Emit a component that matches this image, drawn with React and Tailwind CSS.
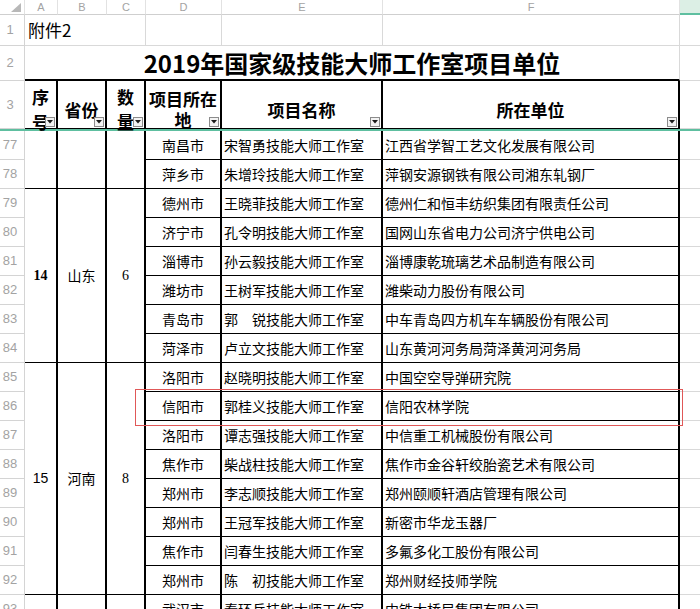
const rows = [
  ["77", "南昌市", "宋智勇技能大师工作室", "江西省学智工艺文化发展有限公司"],
  ["78", "萍乡市", "朱增玲技能大师工作室", "萍钢安源钢铁有限公司湘东轧钢厂"],
  ["79", "德州市", "王晓菲技能大师工作室", "德州仁和恒丰纺织集团有限责任公司"],
  ["80", "济宁市", "孔令明技能大师工作室", "国网山东省电力公司济宁供电公司"],
  ["81", "淄博市", "孙云毅技能大师工作室", "淄博康乾琉璃艺术品制造有限公司"],
  ["82", "潍坊市", "王树军技能大师工作室", "潍柴动力股份有限公司"],
  ["83", "青岛市", "郭　锐技能大师工作室", "中车青岛四方机车车辆股份有限公司"],
  ["84", "菏泽市", "卢立文技能大师工作室", "山东黄河河务局菏泽黄河河务局"],
  ["85", "洛阳市", "赵晓明技能大师工作室", "中国空空导弹研究院"],
  ["86", "信阳市", "郭桂义技能大师工作室", "信阳农林学院"],
  ["87", "洛阳市", "谭志强技能大师工作室", "中信重工机械股份有限公司"],
  ["88", "焦作市", "柴战柱技能大师工作室", "焦作市金谷轩绞胎瓷艺术有限公司"],
  ["89", "郑州市", "李志顺技能大师工作室", "郑州颐顺轩酒店管理有限公司"],
  ["90", "郑州市", "王冠军技能大师工作室", "新密市华龙玉器厂"],
  ["91", "焦作市", "闫春生技能大师工作室", "多氟多化工股份有限公司"],
  ["92", "郑州市", "陈　初技能大师工作室", "郑州财经技师学院"],
  ["93", "武汉市", "秦环兵技能大师工作室", "中铁大桥局集团有限公司"],
];

// merged A-C blocks, keyed by the row where they start
const groups = {
  "77": { span: "row-span-2" },
  "79": { span: "row-span-6", no: "14", noCls: "font-['Liberation_Serif',serif] font-bold", prov: "山东", count: "6" },
  "85": { span: "row-span-8", no: "15", noCls: "font-['Liberation_Sans',sans-serif]", prov: "河南", count: "8" },
  "93": { span: "" },
};

const Drop = () => (
  <span className="absolute right-[1px] bottom-[1px] w-[10px] h-[10px] border border-[#8c8c8c] bg-[#f3f3f3] flex items-center justify-center">
    <svg width="6" height="4" viewBox="0 0 6 4">
      <path d="M0 0h6L3 3.5z" fill="#1a1a1a" />
    </svg>
  </span>
);

const RowHdr = ({ n }) => (
  <div className="flex items-center justify-center pr-[4px] border-r border-b border-[#d4d4d4] text-[13px] text-[#a3a3a3] font-['Liberation_Sans',sans-serif]">
    {n}
  </div>
);

const ColHdr = ({ l }) => (
  <div className="flex items-center justify-center border-r border-b border-r-[#e2e2e2] border-b-[#cfcfcf] text-[11px] text-[#a3a3a3] font-['Liberation_Sans',sans-serif]">
    {l}
  </div>
);

const Head = ({ children, lead = "leading-[25px]" }) => (
  <div className={`relative flex items-center justify-center pt-[9px] text-center font-bold text-[17px] ${lead} border-r-2 border-b border-black`}>
    <span>{children}</span>
    <Drop />
  </div>
);

export default function App() {
  return (
    <div className="relative w-[700px] h-[609px] overflow-hidden bg-white text-black font-['Noto_Sans_CJK_SC',sans-serif]">
      <div className="grid grid-cols-[25px_33px_49px_39px_76px_161px_297px_20px] grid-rows-[15px_31px_35px_48px_2px_repeat(17,29px)]">
        {/* column letters */}
        <div className="flex items-start justify-end pt-[3px] pr-[3px] border-r border-b border-r-[#e2e2e2] border-b-[#cfcfcf]">
          <svg width="10" height="9" viewBox="0 0 10 9">
            <path d="M10 0v9H0z" fill="#b8b8b8" />
          </svg>
        </div>
        <ColHdr l="A" />
        <ColHdr l="B" />
        <ColHdr l="C" />
        <ColHdr l="D" />
        <ColHdr l="E" />
        <ColHdr l="F" />
        <div className="bg-[#dcefe5] border-b-2 border-[#5ebfa0]" />

        {/* row 1 */}
        <RowHdr n="1" />
        <div className="col-span-3 flex items-center pl-[3px] text-[17px] border-r border-b border-[#d9d9d9]">附件2</div>
        <div className="border-r border-b border-[#d9d9d9]" />
        <div className="border-r border-b border-[#d9d9d9]" />
        <div className="border-r border-b border-[#d9d9d9]" />
        <div className="border-b border-[#d9d9d9]" />

        {/* row 2 */}
        <RowHdr n="2" />
        <div className="col-span-6 flex items-center justify-center text-[24px] font-bold border-r border-r-[#d9d9d9] border-b-2 border-b-black">
          2019年国家级技能大师工作室项目单位
        </div>
        <div className="border-b border-[#d9d9d9]" />

        {/* row 3 */}
        <RowHdr n="3" />
        <Head>序<br />号</Head>
        <Head>省份</Head>
        <Head>数<br />量</Head>
        <Head lead="leading-[21px]">项目所在<br />地</Head>
        <Head>项目名称</Head>
        <Head>所在单位</Head>
        <div className="border-b border-[#d9d9d9]" />

        {/* frozen pane line */}
        <div className="col-span-8 bg-[#5ebfa0]" />

        {rows.map(([n, city, studio, unit]) => {
          const g = groups[n];
          return [
            <RowHdr key={n + "h"} n={n} />,
            g && (
              <div key={n + "a"} className={`${g.span} flex items-center justify-center text-[14px] border-r-2 border-b border-black ${g.noCls || ""}`}>
                {g.no}
              </div>
            ),
            g && (
              <div key={n + "b"} className={`${g.span} flex items-center justify-center text-[14px] border-r-2 border-b border-black`}>
                {g.prov}
              </div>
            ),
            g && (
              <div key={n + "c"} className={`${g.span} flex items-center justify-center text-[14px] font-['Liberation_Serif',serif] border-r-2 border-b border-black`}>
                {g.count}
              </div>
            ),
            <div key={n + "d"} className="flex items-center justify-center text-[14px] border-r-2 border-b border-black whitespace-nowrap">
              {city}
            </div>,
            <div key={n + "e"} className="flex items-center pl-[2px] text-[14px] border-r-2 border-b border-black whitespace-pre overflow-hidden">
              {studio}
            </div>,
            <div key={n + "f"} className="flex items-center pl-[2px] text-[14px] border-r-2 border-b border-black whitespace-nowrap">
              {unit}
            </div>,
            <div key={n + "g"} className="border-b border-[#d9d9d9]" />,
          ];
        })}
      </div>

      {/* selection box */}
      <div className="absolute left-[135px] top-[389px] w-[548px] h-[37px] border border-[#e05858] pointer-events-none" />
    </div>
  );
}
